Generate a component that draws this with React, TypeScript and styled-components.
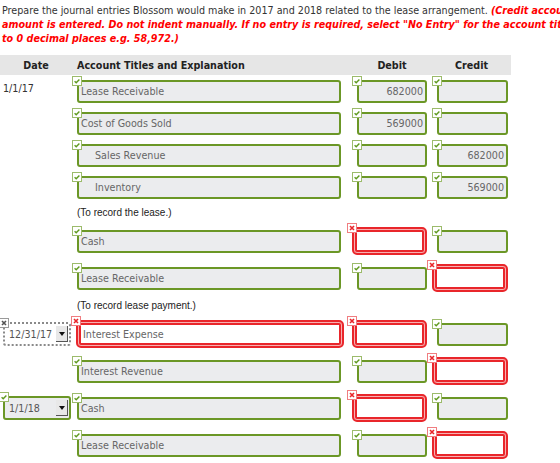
import styled, { createGlobalStyle } from "styled-components";

type Mark = "ok" | "bad" | "none";

type EntryCell = {
  mark: Mark;
  text?: string;
  indent?: boolean;
};

type EntryRow = {
  date?: { kind: "text" | "select"; value: string; mark?: Mark };
  account: EntryCell;
  debit: EntryCell;
  credit: EntryCell;
};

type Line =
  | { type: "entry"; row: EntryRow }
  | { type: "memo"; text: string };

const GlobalStyle = createGlobalStyle`
  html, body {
    margin: 0;
    padding: 0;
    background: #fff;
    overflow: hidden;
  }
  body {
    font-family: "DejaVu Sans", Verdana, sans-serif;
  }
`;

const Page = styled.div`
  width: 560px;
  height: 463px;
  overflow: hidden;
  padding-top: 4px;
`;

const Intro = styled.p`
  margin: 0;
  padding-left: 2px;
  font-size: 9.6px;
  line-height: 14px;
  color: #333;
  white-space: nowrap;
`;

const Hint = styled.span`
  color: #ff0000;
  font-weight: bold;
  font-style: italic;
`;

const COLS = "72px 280px 80px 79px";

const Table = styled.div`
  width: 511px;
  margin-top: 9px;
`;

const Head = styled.div`
  display: grid;
  grid-template-columns: ${COLS};
  height: 20px;
  align-items: center;
  background: #e6e6e6;
  font-size: 9.6px;
  font-weight: bold;
  color: #222;
  margin-bottom: 1px;
`;

const HeadCell = styled.div<{ $align: "left" | "center" }>`
  text-align: ${(p) => p.$align};
  padding-left: ${(p) => (p.$align === "left" ? "5px" : "0")};
`;

const Row = styled.div`
  display: grid;
  grid-template-columns: ${COLS};
  align-items: center;
  padding: 4px 0 5px;
`;

const Memo = styled.div`
  height: 19px;
  line-height: 17px;
  padding-left: 77px;
  font-family: "Liberation Sans", Arial, sans-serif;
  font-size: 10px;
  color: #222;
`;

const DateCell = styled.div`
  align-self: stretch;
  padding-left: 3px;
  display: flex;
  align-items: center;
`;

const DateText = styled.div`
  align-self: flex-start;
  padding-top: 3px;
  font-size: 9.6px;
  color: #333;
`;

const Slot = styled.div<{ $w: number; $shift: number }>`
  position: relative;
  width: ${(p) => p.$w}px;
  margin-left: ${(p) => 5 - p.$shift}px;
`;

const Box = styled.div<{ $bad: boolean; $right: boolean; $indent: boolean }>`
  box-sizing: border-box;
  height: ${(p) => (p.$bad ? 28 : 23)}px;
  border: 2px solid ${(p) => (p.$bad ? "#e9262b" : "#6b9726")};
  border-radius: ${(p) => (p.$bad ? 5 : 3)}px;
  background: ${(p) => (p.$bad ? "#fff" : "#ebecee")};
  box-shadow: ${(p) =>
    p.$bad ? "inset 0 0 0 1px #f7b0b1, inset 0 0 0 3px #e9262b" : "none"};
  display: flex;
  align-items: center;
  justify-content: ${(p) => (p.$right ? "flex-end" : "flex-start")};
  padding: ${(p) => (p.$bad ? "0 5px" : p.$indent ? "0 3px 0 16px" : "0 2px")};
  font-size: 9.6px;
  color: #666;
  white-space: nowrap;
  overflow: hidden;
`;

const Badge = styled.div<{ $tone: "ok" | "bad" | "off" }>`
  position: absolute;
  left: -5px;
  top: -4px;
  width: 10px;
  height: 10px;
  box-sizing: border-box;
  border: 1px solid
    ${(p) => (p.$tone === "ok" ? "#9cbb6b" : p.$tone === "bad" ? "#f07d80" : "#9a9a9a")};
  background: #fff;
  display: flex;
  align-items: center;
  justify-content: center;
  z-index: 1;
`;

const Select = styled.div<{ $ok: boolean }>`
  position: relative;
  box-sizing: border-box;
  width: 68px;
  height: 24px;
  border: 2px ${(p) => (p.$ok ? "solid #6b9726" : "dotted #8a8a8a")};
  border-radius: 3px;
  background: ${(p) => (p.$ok ? "#ebecee" : "#fff")};
  display: flex;
  align-items: center;
  padding-left: 4px;
  font-size: 9.6px;
  color: #555;
`;

const Arrow = styled.div`
  position: absolute;
  right: 1px;
  top: 2px;
  width: 11px;
  height: 15px;
  background: #e8e8e8;
  border-right: 1px solid #555;
  border-bottom: 1px solid #555;
  display: flex;
  align-items: center;
  justify-content: center;
  &::after {
    content: "";
    border-left: 3px solid transparent;
    border-right: 3px solid transparent;
    border-top: 4px solid #111;
  }
`;

function MarkIcon({ tone }: { tone: "ok" | "bad" | "off" }) {
  if (tone === "ok") {
    return (
      <svg width="8" height="8" viewBox="0 0 8 8">
        <path d="M1.6 4.3 L3.2 5.8 L6.4 2.4" fill="none" stroke="#5f9a1e" strokeWidth="1.4" />
      </svg>
    );
  }
  const c = tone === "bad" ? "#e9262b" : "#555";
  return (
    <svg width="8" height="8" viewBox="0 0 8 8">
      <path d="M2 2 L6 6 M6 2 L2 6" stroke={c} strokeWidth="1.6" />
    </svg>
  );
}

function Field({ cell, w, numeric }: { cell: EntryCell; w: number; numeric?: boolean }) {
  const bad = cell.mark === "bad";
  const width = bad ? w + (numeric ? 5 : 4) : w;
  const shift = bad && numeric ? 5 : bad ? 1 : 0;
  return (
    <Slot $w={width} $shift={shift}>
      <Badge $tone={bad ? "bad" : "ok"}>
        <MarkIcon tone={bad ? "bad" : "ok"} />
      </Badge>
      <Box $bad={bad} $right={!!numeric} $indent={!!cell.indent}>
        {cell.text}
      </Box>
    </Slot>
  );
}

function DateField({ date }: { date: EntryRow["date"] }) {
  if (!date) return <DateCell />;
  if (date.kind === "text") {
    return (
      <DateCell>
        <DateText>{date.value}</DateText>
      </DateCell>
    );
  }
  const tone = date.mark === "ok" ? "ok" : "off";
  return (
    <DateCell>
      <Select $ok={tone === "ok"}>
        <Badge $tone={tone} style={{ left: -6, top: -6 }}>
          <MarkIcon tone={tone} />
        </Badge>
        {date.value}
        <Arrow />
      </Select>
    </DateCell>
  );
}

const lines: Line[] = [
  {
    type: "entry",
    row: {
      date: { kind: "text", value: "1/1/17" },
      account: { mark: "ok", text: "Lease Receivable" },
      debit: { mark: "ok", text: "682000" },
      credit: { mark: "ok" },
    },
  },
  {
    type: "entry",
    row: {
      account: { mark: "ok", text: "Cost of Goods Sold" },
      debit: { mark: "ok", text: "569000" },
      credit: { mark: "ok" },
    },
  },
  {
    type: "entry",
    row: {
      account: { mark: "ok", text: "Sales Revenue", indent: true },
      debit: { mark: "ok" },
      credit: { mark: "ok", text: "682000" },
    },
  },
  {
    type: "entry",
    row: {
      account: { mark: "ok", text: "Inventory", indent: true },
      debit: { mark: "ok" },
      credit: { mark: "ok", text: "569000" },
    },
  },
  { type: "memo", text: "(To record the lease.)" },
  {
    type: "entry",
    row: {
      account: { mark: "ok", text: "Cash" },
      debit: { mark: "bad" },
      credit: { mark: "ok" },
    },
  },
  {
    type: "entry",
    row: {
      account: { mark: "ok", text: "Lease Receivable" },
      debit: { mark: "ok" },
      credit: { mark: "bad" },
    },
  },
  { type: "memo", text: "(To record lease payment.)" },
  {
    type: "entry",
    row: {
      date: { kind: "select", value: "12/31/17", mark: "bad" },
      account: { mark: "bad", text: "Interest Expense" },
      debit: { mark: "bad" },
      credit: { mark: "ok" },
    },
  },
  {
    type: "entry",
    row: {
      account: { mark: "ok", text: "Interest Revenue" },
      debit: { mark: "ok" },
      credit: { mark: "bad" },
    },
  },
  {
    type: "entry",
    row: {
      date: { kind: "select", value: "1/1/18", mark: "ok" },
      account: { mark: "ok", text: "Cash" },
      debit: { mark: "bad" },
      credit: { mark: "ok" },
    },
  },
  {
    type: "entry",
    row: {
      account: { mark: "ok", text: "Lease Receivable" },
      debit: { mark: "ok" },
      credit: { mark: "bad" },
    },
  },
];

export default function App() {
  return (
    <Page>
      <GlobalStyle />
      <Intro>
        Prepare the journal entries Blossom would make in 2017 and 2018 related to the lease
        arrangement.{" "}
        <Hint>(Credit account titles are automatically indented when</Hint>
        <br />
        <Hint>
          amount is entered. Do not indent manually. If no entry is required, select "No Entry"
          for the account titles and enter 0 for the amounts. Round answers
        </Hint>
        <br />
        <Hint>to 0 decimal places e.g. 58,972.)</Hint>
      </Intro>
      <Table>
        <Head>
          <HeadCell $align="center">Date</HeadCell>
          <HeadCell $align="left">Account Titles and Explanation</HeadCell>
          <HeadCell $align="center">Debit</HeadCell>
          <HeadCell $align="center">Credit</HeadCell>
        </Head>
        {lines.map((line, i) =>
          line.type === "memo" ? (
            <Memo key={i}>{line.text}</Memo>
          ) : (
            <Row key={i}>
              <DateField date={line.row.date} />
              <Field cell={line.row.account} w={264} />
              <Field cell={line.row.debit} w={70} numeric />
              <Field cell={line.row.credit} w={71} numeric />
            </Row>
          )
        )}
      </Table>
    </Page>
  );
}
